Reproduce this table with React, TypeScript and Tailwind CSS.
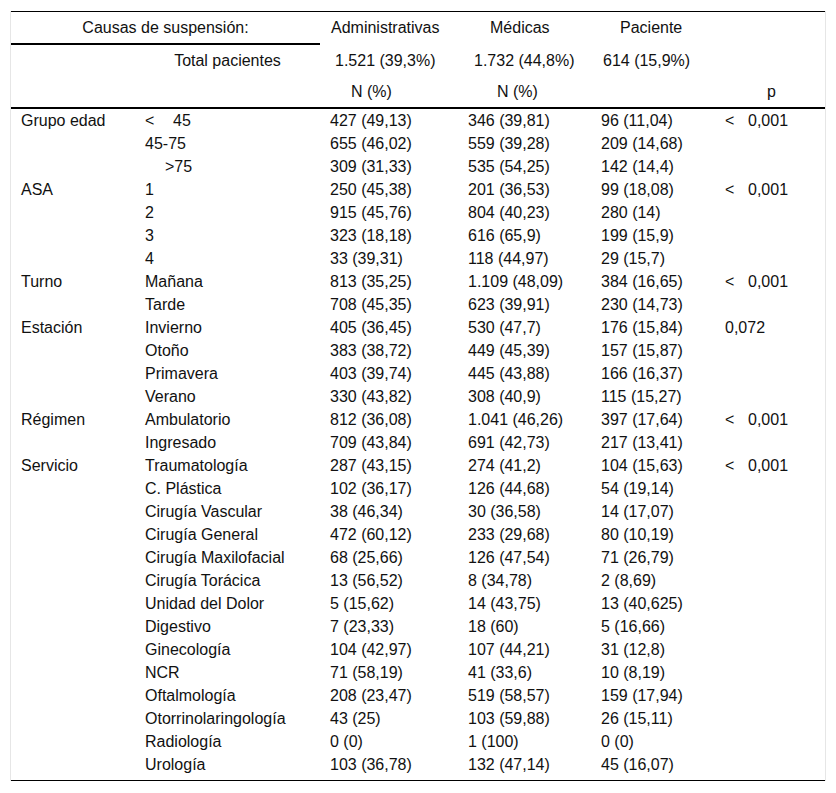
import React from 'react';

type Row = { group?: string; label: React.ReactNode; adm: string; med: string; pac: string; p?: React.ReactNode };

const lt = (v: string) => (
  <span>
    <span className="inline-block w-[23px]">&lt;</span>
    {v}
  </span>
);

const rows: Row[] = [
  { group: 'Grupo edad', label: <span><span className="inline-block w-[28px]">&lt;</span>45</span>, adm: '427 (49,13)', med: '346 (39,81)', pac: '96 (11,04)', p: lt('0,001') },
  { label: '45-75', adm: '655 (46,02)', med: '559 (39,28)', pac: '209 (14,68)' },
  { label: <span className="pl-[20px]">&gt;75</span>, adm: '309 (31,33)', med: '535 (54,25)', pac: '142 (14,4)' },
  { group: 'ASA', label: '1', adm: '250 (45,38)', med: '201 (36,53)', pac: '99 (18,08)', p: lt('0,001') },
  { label: '2', adm: '915 (45,76)', med: '804 (40,23)', pac: '280 (14)' },
  { label: '3', adm: '323 (18,18)', med: '616 (65,9)', pac: '199 (15,9)' },
  { label: '4', adm: '33 (39,31)', med: '118 (44,97)', pac: '29 (15,7)' },
  { group: 'Turno', label: 'Mañana', adm: '813 (35,25)', med: '1.109 (48,09)', pac: '384 (16,65)', p: lt('0,001') },
  { label: 'Tarde', adm: '708 (45,35)', med: '623 (39,91)', pac: '230 (14,73)' },
  { group: 'Estación', label: 'Invierno', adm: '405 (36,45)', med: '530 (47,7)', pac: '176 (15,84)', p: '0,072' },
  { label: 'Otoño', adm: '383 (38,72)', med: '449 (45,39)', pac: '157 (15,87)' },
  { label: 'Primavera', adm: '403 (39,74)', med: '445 (43,88)', pac: '166 (16,37)' },
  { label: 'Verano', adm: '330 (43,82)', med: '308 (40,9)', pac: '115 (15,27)' },
  { group: 'Régimen', label: 'Ambulatorio', adm: '812 (36,08)', med: '1.041 (46,26)', pac: '397 (17,64)', p: lt('0,001') },
  { label: 'Ingresado', adm: '709 (43,84)', med: '691 (42,73)', pac: '217 (13,41)' },
  { group: 'Servicio', label: 'Traumatología', adm: '287 (43,15)', med: '274 (41,2)', pac: '104 (15,63)', p: lt('0,001') },
  { label: 'C. Plástica', adm: '102 (36,17)', med: '126 (44,68)', pac: '54 (19,14)' },
  { label: 'Cirugía Vascular', adm: '38 (46,34)', med: '30 (36,58)', pac: '14 (17,07)' },
  { label: 'Cirugía General', adm: '472 (60,12)', med: '233 (29,68)', pac: '80 (10,19)' },
  { label: 'Cirugía Maxilofacial', adm: '68 (25,66)', med: '126 (47,54)', pac: '71 (26,79)' },
  { label: 'Cirugía Torácica', adm: '13 (56,52)', med: '8 (34,78)', pac: '2 (8,69)' },
  { label: 'Unidad del Dolor', adm: '5 (15,62)', med: '14 (43,75)', pac: '13 (40,625)' },
  { label: 'Digestivo', adm: '7 (23,33)', med: '18 (60)', pac: '5 (16,66)' },
  { label: 'Ginecología', adm: '104 (42,97)', med: '107 (44,21)', pac: '31 (12,8)' },
  { label: 'NCR', adm: '71 (58,19)', med: '41 (33,6)', pac: '10 (8,19)' },
  { label: 'Oftalmología', adm: '208 (23,47)', med: '519 (58,57)', pac: '159 (17,94)' },
  { label: 'Otorrinolaringología', adm: '43 (25)', med: '103 (59,88)', pac: '26 (15,11)' },
  { label: 'Radiología', adm: '0 (0)', med: '1 (100)', pac: '0 (0)' },
  { label: 'Urología', adm: '103 (36,78)', med: '132 (47,14)', pac: '45 (16,07)' },
];

const cols = 'grid grid-cols-[124px_185px_138px_133px_126px_108px]';

export default function App() {
  return (
    <div className="min-h-[793px] bg-white pt-[11px] text-[16px] text-[#111] [font-family:'Liberation_Sans',Arial,sans-serif]">
      <div className="ml-[10px] w-[816px] border-x border-[#e6e6e6]">
        <div className="h-px bg-black" />

        {/* header */}
        <div className={`${cols} h-[31px] items-center leading-[23px]`}>
          <div className="col-span-2 text-center">Causas de suspensión:</div>
          <div className="pl-[11px]">Administrativas</div>
          <div className="pl-[32px]">Médicas</div>
          <div className="pl-[29px]">Paciente</div>
          <div />
        </div>
        <div className="h-[2px] w-[309px] bg-black" />
        <div className={`${cols} h-[31px] items-center leading-[23px]`}>
          <div />
          <div className="text-center">Total pacientes</div>
          <div className="pl-[15px]">1.521 (39,3%)</div>
          <div className="pl-[16px]">1.732 (44,8%)</div>
          <div className="pl-[12px]">614 (15,9%)</div>
          <div />
        </div>
        <div className={`${cols} h-[31px] items-center leading-[23px]`}>
          <div />
          <div />
          <div className="pl-[31px]">N (%)</div>
          <div className="pl-[39px]">N (%)</div>
          <div />
          <div className="pl-[50px]">p</div>
        </div>
        <div className="h-[2px] bg-black" />

        {/* body */}
        <div className="pb-[4px]">
          {rows.map((r, i) => (
            <div key={i} className={`${cols} h-[23px] items-center leading-[23px] whitespace-nowrap`}>
              <div className="pl-[10px]">{r.group ?? ''}</div>
              <div className="pl-[10px]">{r.label}</div>
              <div className="pl-[10px]">{r.adm}</div>
              <div className="pl-[10px]">{r.med}</div>
              <div className="pl-[10px]">{r.pac}</div>
              <div className="pl-[8px]">{r.p ?? ''}</div>
            </div>
          ))}
        </div>
        <div className="h-px bg-black" />
      </div>
    </div>
  );
}
